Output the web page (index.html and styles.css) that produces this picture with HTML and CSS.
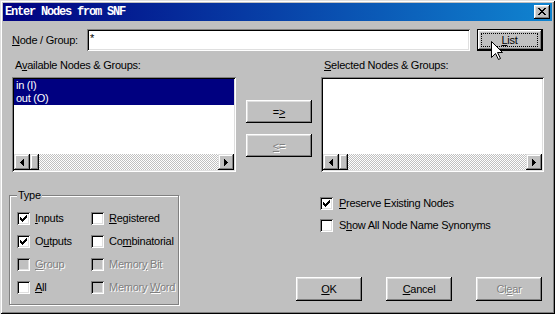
FILE: index.html
```html
<!doctype html>
<html>
<head>
  <meta charset="utf-8">
  <title>Enter Nodes from SNF</title>
  <link rel="stylesheet" href="styles.css">
</head>
<body>

  <div class="window">
    <div class="titlebar">
      <span class="title">Enter Nodes from SNF</span>
      <span class="close">
        <svg width="8" height="7" viewBox="0 0 8 7" shape-rendering="crispEdges"><path d="M0 0h2v1h-2zM6 0h2v1h-2zM1 1h2v1h-2zM5 1h2v1h-2zM2 2h4v1h-4zM3 3h2v1h-2zM2 4h4v1h-4zM1 5h2v1h-2zM5 5h2v1h-2zM0 6h2v1h-2zM6 6h2v1h-2z" fill="#000"/></svg>
      </span>
    </div>

    <div class="content">
      <div class="node-row">
        <label class="node-label"><u>N</u>ode / Group:</label>
        <div class="field sunken">*</div>
        <button class="btn default list-btn"><span class="focus"><u>L</u>ist</span></button>
      </div>

      <div class="lists">
        <div class="col col-left">
          <div class="cap">A<u>v</u>ailable Nodes &amp; Groups:</div>
          <div class="listbox sunken">
            <div class="items">
              <div class="item sel">in (I)</div>
              <div class="item sel">out (O)</div>
            </div>
            <div class="hscroll">
              <span class="arrow"><svg width="4" height="7" viewBox="0 0 4 7" shape-rendering="crispEdges"><path d="M0 3h1v1h-1zM1 2h1v3h-1zM2 1h1v5h-1zM3 0h1v7h-1z" fill="#000"/></svg></span>
              <span class="thumb"></span>
              <span class="track"></span>
              <span class="arrow"><svg width="4" height="7" viewBox="0 0 4 7" shape-rendering="crispEdges"><path d="M0 0h1v7h-1zM1 1h1v5h-1zM2 2h1v3h-1zM3 3h1v1h-1z" fill="#000"/></svg></span>
            </div>
          </div>
        </div>

        <div class="mid">
          <button class="btn">=<u>&gt;</u></button>
          <button class="btn disabled"><u>&lt;</u>=</button>
        </div>

        <div class="col col-right">
          <div class="cap"><u>S</u>elected Nodes &amp; Groups:</div>
          <div class="listbox sunken">
            <div class="items"></div>
            <div class="hscroll">
              <span class="arrow"><svg width="4" height="7" viewBox="0 0 4 7" shape-rendering="crispEdges"><path d="M0 3h1v1h-1zM1 2h1v3h-1zM2 1h1v5h-1zM3 0h1v7h-1z" fill="#000"/></svg></span>
              <span class="thumb"></span>
              <span class="track"></span>
              <span class="arrow"><svg width="4" height="7" viewBox="0 0 4 7" shape-rendering="crispEdges"><path d="M0 0h1v7h-1zM1 1h1v5h-1zM2 2h1v3h-1zM3 3h1v1h-1z" fill="#000"/></svg></span>
            </div>
          </div>
        </div>
      </div>

      <div class="bottom">
        <div class="group">
          <div class="legend">Type</div>
          <div class="checks">
            <div class="check"><span class="cb on"></span><span><u>I</u>nputs</span></div>
            <div class="check"><span class="cb"></span><span><u>R</u>egistered</span></div>
            <div class="check"><span class="cb on"></span><span>O<u>u</u>tputs</span></div>
            <div class="check"><span class="cb"></span><span>Co<u>m</u>binatorial</span></div>
            <div class="check off"><span class="cb"></span><span><u>G</u>roup</span></div>
            <div class="check off"><span class="cb"></span><span>Memor<u>y</u> Bit</span></div>
            <div class="check"><span class="cb"></span><span><u>A</u>ll</span></div>
            <div class="check off"><span class="cb"></span><span>Memory <u>W</u>ord</span></div>
          </div>
        </div>

        <div class="right">
          <div class="opts">
            <div class="check wide"><span class="cb on"></span><span><u>P</u>reserve Existing Nodes</span></div>
            <div class="check wide"><span class="cb"></span><span>S<u>h</u>ow All Node Name Synonyms</span></div>
          </div>
          <div class="actions">
            <button class="btn"><u>O</u>K</button>
            <button class="btn"><u>C</u>ancel</button>
            <button class="btn disabled">Cl<u>e</u>ar</button>
          </div>
        </div>
      </div>
    </div>

    <svg class="cursor" width="12" height="20" viewBox="0 0 12 20"><path d="M0.5 0.5V16.5L4.5 12.5L7.5 18.5L9.5 17.5L6.5 11.5H11.5Z" fill="#fff" stroke="#000" stroke-width="1"/></svg>
  </div>

</body>
</html>
```

FILE: styles.css
```css
body {
  margin: 0;
  font-family: "Liberation Sans", Arial, sans-serif;
  font-size: 11px;
  line-height: 13px;
  letter-spacing: -0.25px;
  color: #000;
}
u {
  text-underline-offset: 1px;
}
.window {
  position: relative;
  width: 555px;
  height: 314px;
  box-sizing: border-box;
  padding: 3px;
  background: #c0c0c0;
  box-shadow: inset 1px 1px #dfdfdf, inset -1px -1px #000, inset 2px 2px #fff, inset -2px -2px #808080;
  display: flex;
  flex-direction: column;
}
.titlebar {
  height: 18px;
  padding: 0 2px;
  display: flex;
  align-items: center;
  justify-content: space-between;
  background: linear-gradient(90deg, #000080, #1084d0);
}
.title {
  color: #fff;
  font-family: "Liberation Mono", monospace;
  font-weight: bold;
  font-size: 12px;
  letter-spacing: -1.2px;
}
.close {
  width: 16px;
  height: 14px;
  box-sizing: border-box;
  display: flex;
  align-items: center;
  justify-content: center;
  padding: 0 1px 1px 0;
  background: #c0c0c0;
  box-shadow: inset -1px -1px #000, inset 1px 1px #fff, inset -2px -2px #808080, inset 2px 2px #dfdfdf;
}
.close svg {
  display: block;
}
.content {
  padding: 8px 9px 0 9px;
  display: flex;
  flex-direction: column;
}
.sunken {
  background: #fff;
  box-shadow: inset 1px 1px #808080, inset -1px -1px #fff, inset 2px 2px #000, inset -2px -2px #dfdfdf;
}
.btn {
  margin: 0;
  padding: 0;
  border: none;
  box-sizing: border-box;
  width: 66px;
  height: 23px;
  background: #c0c0c0;
  font-family: "Liberation Sans", Arial, sans-serif;
  font-size: 11px;
  letter-spacing: -0.25px;
  color: #000;
  box-shadow: inset -1px -1px #000, inset 1px 1px #fff, inset -2px -2px #808080, inset 2px 2px #dfdfdf;
}
.btn.default {
  border: 1px solid #000;
}
.btn.disabled {
  color: #808080;
  text-shadow: 1px 1px 0 #fff;
}

/* node row */
.node-row {
  display: flex;
  align-items: center;
  height: 22px;
}
.node-label {
  width: 75px;
  flex-shrink: 0;
}
.field {
  width: 383px;
  height: 22px;
  box-sizing: border-box;
  padding: 3px 3px;
  flex-shrink: 0;
}
.list-btn {
  margin-left: 7px;
  height: 22px;
  flex-shrink: 0;
  display: flex;
  padding: 2px;
}
.focus {
  flex: 1;
  display: flex;
  align-items: center;
  justify-content: center;
  outline: 1px dotted #000;
  outline-offset: -1px;
  margin: 1px 2px 1px 1px;
}

/* lists */
.lists {
  display: flex;
  margin-top: 8px;
}
.col {
  flex-shrink: 0;
}
.col-left {
  width: 224px;
}
.col-right {
  width: 223px;
}
.cap {
  height: 13px;
  padding-left: 3px;
  margin-bottom: 5px;
  white-space: nowrap;
}
.listbox {
  height: 95px;
  box-sizing: border-box;
  padding: 2px;
  display: flex;
  flex-direction: column;
}
.items {
  flex: 1;
}
.item {
  height: 13px;
  padding-left: 2px;
}
.item.sel {
  background: #000080;
  color: #fff;
}
.hscroll {
  height: 16px;
  display: flex;
}
.arrow {
  width: 16px;
  height: 16px;
  box-sizing: border-box;
  display: flex;
  align-items: center;
  justify-content: center;
  background: #c0c0c0;
  box-shadow: inset -1px -1px #000, inset 1px 1px #dfdfdf, inset -2px -2px #808080, inset 2px 2px #fff;
}
.thumb {
  width: 9px;
  height: 16px;
  background: #c0c0c0;
  box-shadow: inset -1px -1px #000, inset 1px 1px #dfdfdf, inset -2px -2px #808080, inset 2px 2px #fff;
}
.track {
  flex: 1;
  background: repeating-conic-gradient(#c0c0c0 0 25%, #fff 0 50%) 0 0 / 2px 2px;
}
.mid {
  width: 66px;
  margin: 0 9px 0 10px;
  padding-top: 41px;
  flex-shrink: 0;
  display: flex;
  flex-direction: column;
  gap: 11px;
}

/* bottom */
.bottom {
  display: flex;
  align-items: flex-start;
}
.group {
  width: 170px;
  height: 110px;
  box-sizing: border-box;
  margin: 23px 0 0 -3px;
  border: 1px solid #808080;
  box-shadow: 1px 1px 0 #fff, inset 1px 1px 0 #fff;
  display: flex;
  flex-direction: column;
  flex-shrink: 0;
}
.legend {
  align-self: flex-start;
  margin: -7px 0 0 7px;
  padding: 0 1px;
  background: #c0c0c0;
}
.checks {
  display: grid;
  grid-template-columns: 74px auto;
  row-gap: 10px;
  margin-top: 10px;
  padding-left: 7px;
}
.check {
  display: flex;
  align-items: center;
  gap: 5px;
  height: 13px;
  white-space: nowrap;
}
.check.wide {
  gap: 6px;
}
.cb {
  width: 13px;
  height: 13px;
  box-sizing: border-box;
  flex-shrink: 0;
  background: #fff;
  box-shadow: inset 1px 1px #808080, inset -1px -1px #fff, inset 2px 2px #000, inset -2px -2px #dfdfdf;
}
.cb.on {
  background: #fff url("data:image/svg+xml,%3Csvg xmlns='http://www.w3.org/2000/svg' width='7' height='7' shape-rendering='crispEdges'%3E%3Cpath d='M0 2h1v3h-1zM1 3h1v3h-1zM2 4h1v3h-1zM3 3h1v3h-1zM4 2h1v3h-1zM5 1h1v3h-1zM6 0h1v3h-1z'/%3E%3C/svg%3E") no-repeat 3px 3px;
}
.check.off {
  color: #808080;
  text-shadow: 1px 1px 0 #fff;
}
.check.off .cb {
  background: #c0c0c0;
}
.right {
  width: 246px;
  margin: 25px 0 0 117px;
  flex-shrink: 0;
}
.opts {
  display: flex;
  flex-direction: column;
  gap: 9px;
  padding-left: 24px;
}
.actions {
  display: flex;
  gap: 24px;
  margin-top: 45px;
}
.actions .btn {
  height: 24px;
}
.cursor {
  position: absolute;
  left: 491px;
  top: 41px;
}
```
